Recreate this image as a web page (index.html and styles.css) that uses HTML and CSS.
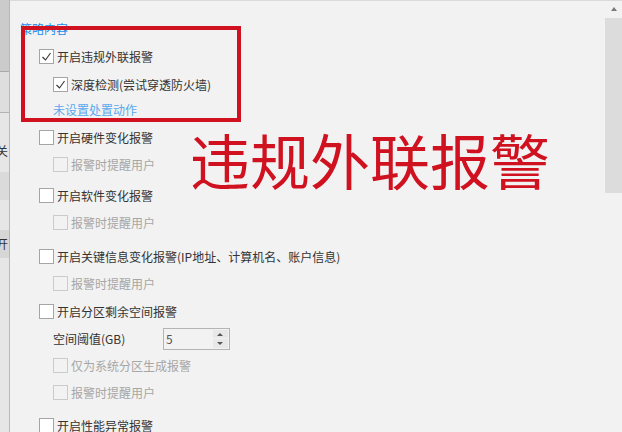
FILE: index.html
```html
<!DOCTYPE html>
<html lang="zh-CN">

<head>
    <meta charset="UTF-8">
    <meta name="viewport" content="width=device-width, initial-scale=1.0">
    <title>策略内容</title>
    <link rel="stylesheet" href="styles.css">
</head>

<body>
    <div class="app">
        <div class="side">
            <div class="side-a"></div>
            <div class="side-b"></div>
            <div class="side-c"><span>关</span></div>
            <div class="side-d"></div>
            <div class="side-e"></div>
            <div class="side-f"><span>开</span></div>
        </div>

        <div class="main">
            <div class="topbar"></div>
            <div class="body">
                <div class="content">
                    <div class="title">策略内容</div>

                    <div class="row r1">
                        <span class="box checked"><svg viewBox="0 0 13 13"><polyline points="2.5,7 5.5,10 10.5,3" /></svg></span>
                        <span class="label">开启违规外联报警</span>
                    </div>
                    <div class="row sub r2">
                        <span class="box checked"><svg viewBox="0 0 13 13"><polyline points="2.5,7 5.5,10 10.5,3" /></svg></span>
                        <span class="label">深度检测(尝试穿透防火墙)</span>
                    </div>
                    <div class="row sub link-row">
                        <a class="link">未设置处置动作</a>
                    </div>

                    <div class="row g-start">
                        <span class="box"></span>
                        <span class="label">开启硬件变化报警</span>
                    </div>
                    <div class="row sub off">
                        <span class="box"></span>
                        <span class="label">报警时提醒用户</span>
                    </div>

                    <div class="row g-start g3">
                        <span class="box"></span>
                        <span class="label">开启软件变化报警</span>
                    </div>
                    <div class="row sub off">
                        <span class="box"></span>
                        <span class="label">报警时提醒用户</span>
                    </div>

                    <div class="row g-start g5">
                        <span class="box"></span>
                        <span class="label">开启关键信息变化报警(IP地址、计算机名、账户信息)</span>
                    </div>
                    <div class="row sub off">
                        <span class="box"></span>
                        <span class="label">报警时提醒用户</span>
                    </div>

                    <div class="row g-start">
                        <span class="box"></span>
                        <span class="label">开启分区剩余空间报警</span>
                    </div>
                    <div class="row sub field">
                        <span class="field-label">空间阈值(GB)</span>
                        <div class="spin">
                            <span class="spin-val">5</span>
                            <div class="spin-btns">
                                <span class="spin-up"></span>
                                <span class="spin-down"></span>
                            </div>
                        </div>
                    </div>
                    <div class="row sub off">
                        <span class="box"></span>
                        <span class="label">仅为系统分区生成报警</span>
                    </div>
                    <div class="row sub off">
                        <span class="box"></span>
                        <span class="label">报警时提醒用户</span>
                    </div>

                    <div class="row g-start g4">
                        <span class="box"></span>
                        <span class="label">开启性能异常报警</span>
                    </div>
                </div>

                <div class="scrollbar">
                    <span class="arrow-up"></span>
                    <div class="thumb"></div>
                </div>
            </div>
        </div>
    </div>

    <!-- 标注 -->
    <div class="mark-box"></div>
    <div class="mark-text">违规外联报警</div>
</body>

</html>
```

FILE: styles.css
```css
html,
body {
    padding: 0;
    margin: 0;
}

body {
    width: 622px;
    height: 432px;
    overflow: hidden;
    background: #f2f2f2;
    font-family: "Noto Sans CJK SC", "Noto Sans", sans-serif;
    font-size: 12px;
    color: #333;
}

.app {
    display: flex;
    height: 432px;
}

/* 左侧背后窗口 */
.side {
    width: 9px;
    border-right: 1px solid #b8b8b8;
    background: #e6e6e6;
    overflow: hidden;
    display: flex;
    flex-direction: column;
}

.side-a { height: 71px; background: #cbcbcb; border-bottom: 1px solid #a9a9a9; }
.side-b { height: 40px; background: #dedede; border-bottom: 1px solid #b2b2b2; }
.side-c { height: 59px; }
.side-d { height: 28px; background: #dadada; }
.side-e { height: 30px; }
.side-f { height: 28px; background: #d6d6d6; }

.side span {
    display: block;
    margin-left: -4px;
    line-height: 28px;
    font-size: 12px;
    color: #333;
}

.side-c span {
    margin-top: 28px;
    line-height: 20px;
}

.main {
    flex: 1;
    display: flex;
    flex-direction: column;
}

.topbar {
    height: 7px;
    background: #f8f8f8;
    border-bottom: 1px solid #dadada;
}

.body {
    flex: 1;
    display: flex;
}

.content {
    flex: 1;
    padding-left: 10px;
    padding-top: 20px;
}

.title {
    height: 16px;
    line-height: 16px;
    color: #1a8cec;
}

.row {
    display: flex;
    align-items: center;
    height: 27px;
    padding-left: 19px;
    white-space: nowrap;
}

.r1 {
    margin-top: 6px;
}

.r2 {
    margin-top: 1px;
}

.link-row {
    margin-top: -2px;
}

.sub {
    padding-left: 33px;
}

.g-start {
    margin-top: 1px;
}

.g3 {
    margin-top: 4px;
}

.g4 {
    margin-top: 6px;
}

.g5 {
    margin-top: 7px;
}

.box {
    box-sizing: border-box;
    width: 15px;
    height: 15px;
    border: 1px solid #a5a5a5;
    background: #fff;
    display: flex;
    align-items: center;
    justify-content: center;
    flex-shrink: 0;
}

.box svg {
    width: 13px;
    height: 13px;
}

.box polyline {
    fill: none;
    stroke: #333;
    stroke-width: 1.1;
}

.label {
    margin-left: 3px;
}

.off .box {
    border-color: #cbcbcb;
    background: #f2f2f2;
}

.off .label {
    color: #a6a6a6;
}

.link {
    color: #58a8ee;
    cursor: pointer;
}

.field-label {
    width: 110px;
}

.spin {
    box-sizing: border-box;
    width: 67px;
    height: 22px;
    border: 1px solid #b4b4b4;
    display: flex;
    align-items: center;
    padding-left: 2px;
}

.spin-val {
    flex: 1;
    color: #555;
    font-size: 12px;
}

.spin-btns {
    width: 15px;
    height: 18px;
    margin-right: 1px;
    display: flex;
    flex-direction: column;
    gap: 1px;
}

.spin-up,
.spin-down {
    flex: 1;
    background: #e8e8e8;
    position: relative;
}

.spin-up::after,
.spin-down::after {
    content: "";
    position: absolute;
    left: 4px;
    top: 3px;
    border-left: 3px solid transparent;
    border-right: 3px solid transparent;
}

.spin-up::after {
    border-bottom: 3px solid #555;
}

.spin-down::after {
    border-top: 3px solid #555;
}

/* 滚动条 */
.scrollbar {
    width: 17px;
    display: flex;
    flex-direction: column;
    align-items: center;
}

.arrow-up {
    margin-top: 6px;
    width: 0;
    height: 0;
    border-left: 3px solid transparent;
    border-right: 3px solid transparent;
    border-bottom: 4px solid #7a7a7a;
}

.thumb {
    margin-top: 7px;
    width: 17px;
    height: 175px;
    background: #dcdcdc;
}

/* 红色标注 */
.mark-box {
    position: absolute;
    left: 21px;
    top: 26px;
    width: 212px;
    height: 88px;
    border: 4px solid #d0111f;
}

.mark-text {
    position: absolute;
    left: 190px;
    top: 129px;
    font-size: 60px;
    line-height: 60px;
    color: #d0111f;
    white-space: nowrap;
}
```
